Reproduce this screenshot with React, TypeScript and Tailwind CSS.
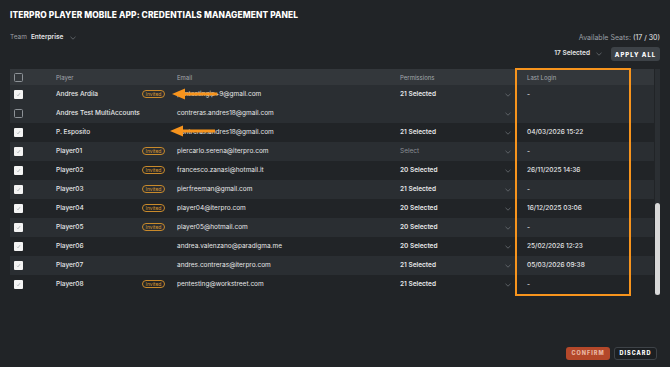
import React from "react";

type Row = {
  name: string;
  invited: boolean;
  checked: boolean;
  email: string;
  perm: string;
  login: string;
};

const rows: Row[] = [
  { name: "Andres Ardila", invited: true, checked: true, email: "pentestingip+9@gmail.com", perm: "21 Selected", login: "-" },
  { name: "Andres Test MultiAccounts", invited: false, checked: false, email: "contreras.andres18@gmail.com", perm: "", login: "" },
  { name: "P. Esposito", invited: false, checked: true, email: "contreras.andres18@gmail.com", perm: "21 Selected", login: "04/03/2026 15:22" },
  { name: "Player01", invited: true, checked: true, email: "piercarlo.serena@iterpro.com", perm: "Select", login: "-" },
  { name: "Player02", invited: true, checked: true, email: "francesco.zanasi@hotmail.it", perm: "20 Selected", login: "26/11/2025 14:36" },
  { name: "Player03", invited: true, checked: true, email: "pierfreeman@gmail.com", perm: "21 Selected", login: "-" },
  { name: "Player04", invited: true, checked: true, email: "player04@iterpro.com", perm: "20 Selected", login: "16/12/2025 03:06" },
  { name: "Player05", invited: true, checked: true, email: "player05@hotmail.com", perm: "20 Selected", login: "-" },
  { name: "Player06", invited: false, checked: true, email: "andrea.valenzano@paradigma.me", perm: "20 Selected", login: "25/02/2026 12:23" },
  { name: "Player07", invited: false, checked: true, email: "andres.contreras@iterpro.com", perm: "21 Selected", login: "05/03/2026 09:38" },
  { name: "Player08", invited: true, checked: true, email: "pentesting@workstreet.com", perm: "21 Selected", login: "-" },
];

function Chevron() {
  return (
    <svg width="6" height="4" viewBox="0 0 6 4" fill="none">
      <path d="M0.5 0.8L3 3.2L5.5 0.8" stroke="#6b7075" strokeWidth="0.8" />
    </svg>
  );
}

function Checkbox({ checked }: { checked: boolean }) {
  if (!checked) {
    return <div className="w-[9px] h-[9px] rounded-[1.5px] border border-[#8d9297]" />;
  }
  return (
    <div className="w-[9px] h-[9px] rounded-[1px] bg-[#f4f4f4] flex items-center justify-center">
      <svg width="5" height="5" viewBox="0 0 5 5" fill="none">
        <path d="M1 2.8L2 3.8L4 1.2" stroke="#9aa0a6" strokeWidth="0.7" />
      </svg>
    </div>
  );
}

function Arrow() {
  return (
    <svg width="46" height="12" viewBox="0 0 46 12" fill="none">
      <path d="M12 4.6H45V7.4H12z" fill="#f7941d" />
      <path d="M0 6L13 0.5V11.5z" fill="#f7941d" />
    </svg>
  );
}

export default function App() {
  return (
    <div className="w-[670px] h-[367px] bg-[#212427] text-[#e9eaeb] font-['Inter',sans-serif] flex flex-col overflow-hidden">
      <div className="px-[10px] pt-[10px]">
        <h1 className="h-[11px] text-[8.4px] leading-[11px] font-extrabold tracking-[0.1px] text-white">
          ITERPRO PLAYER MOBILE APP: CREDENTIALS MANAGEMENT PANEL
        </h1>

        <div className="mt-[12px] h-[10px] flex items-center justify-between text-[6.5px]">
          <div className="flex items-center">
            <span className="text-[#9a9fa4]">Team</span>
            <span className="ml-[4px] font-semibold text-[#e4e5e6]">Enterprise</span>
            <span className="ml-[7px]">
              <Chevron />
            </span>
          </div>
          <div className="text-[7px] text-[#9a9fa4]">
            Available Seats: <span className="text-[#e9eaeb]">(17 / 30)</span>
          </div>
        </div>

        <div className="mt-[4px] flex items-center justify-end">
          <span className="text-[6.5px] font-semibold text-[#e4e5e6]">17 Selected</span>
          <span className="ml-[6px] mr-[9px]">
            <Chevron />
          </span>
          <button className="h-[14px] w-[49px] rounded-[3px] bg-[#3d4247] text-[6px] font-extrabold tracking-[1px] text-white">
            APPLY ALL
          </button>
        </div>

        <div className="relative mt-[8px] flex">
          <div className="w-[645px] text-[6.5px]">
            <div className="h-[16px] flex items-center bg-[#33373b] text-[#a3a8ad] text-[6px]">
              <div className="w-[46px] pl-[4px]">
                <Checkbox checked={false} />
              </div>
              <div className="w-[121px]">Player</div>
              <div className="w-[223px]">Email</div>
              <div className="w-[127px]">Permissions</div>
              <div className="flex-1">Last Login</div>
            </div>
            {rows.map((r, i) => (
              <div
                key={i}
                className={`h-[19px] flex items-center ${i === 0 || i % 2 === 1 ? "bg-[#2a2e32]" : "bg-[#212427]"}`}
              >
                <div className="w-[46px] pl-[4px]">
                  <Checkbox checked={r.checked} />
                </div>
                <div className="w-[86px] font-medium text-[#e6e7e8]">{r.name}</div>
                <div className="w-[35px]">
                  {r.invited && (
                    <span className="inline-flex h-[8px] w-[23px] items-center justify-center rounded-full border border-[#c98a2b] text-[5px] text-[#d9952e]">
                      Invited
                    </span>
                  )}
                </div>
                <div className="w-[223px] text-[#e6e7e8]">{r.email}</div>
                <div className="w-[115px] flex items-center justify-between pr-[4px]">
                  <span className={r.perm === "Select" ? "text-[#8a8f94]" : "font-semibold text-[#e6e7e8]"}>
                    {r.perm}
                  </span>
                  <Chevron />
                </div>
                <div className="pl-[12px] font-medium text-[#e6e7e8]">{r.login}</div>
              </div>
            ))}
          </div>

          <div className="ml-[1px] w-[5px] h-[226px] bg-[#2b2f33] flex flex-col justify-end">
            <div className="h-[92px] rounded-full bg-[#d9d9d9]" />
          </div>

          <div className="absolute left-[505px] top-[-1px] w-[116px] h-[228px] border-2 border-[#f7941d]" />
          <div className="absolute left-[162px] top-[19px]">
            <Arrow />
          </div>
          <div className="absolute left-[160px] top-[56px]">
            <Arrow />
          </div>
        </div>
      </div>

      <div className="mt-auto mb-[7px] mr-[13px] flex justify-end gap-[4px]">
        <button className="h-[13px] w-[44px] rounded-[3px] bg-[#b4482a] text-[5.5px] font-extrabold tracking-[1px] text-[#eab8a4]">
          CONFIRM
        </button>
        <button className="h-[13px] w-[43px] rounded-[3px] border border-[#3e4348] bg-[#1c1f22] text-[5.5px] font-extrabold tracking-[1px] text-white">
          DISCARD
        </button>
      </div>
    </div>
  );
}
